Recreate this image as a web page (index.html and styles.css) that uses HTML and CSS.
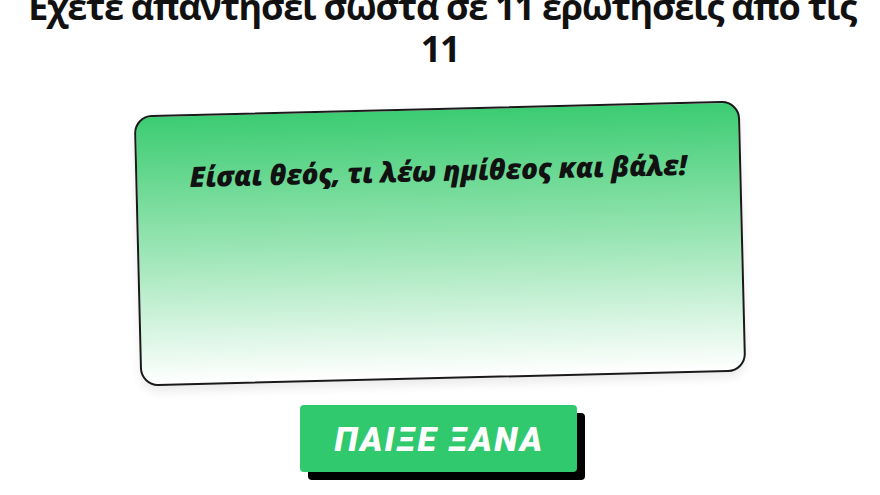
FILE: index.html
```html
<!DOCTYPE html>
<html lang="el">
<head>
<meta charset="utf-8">
<link rel="stylesheet" href="styles.css">
</head>
<body>
<main class="page">
  <h1 class="title">Έχετε απαντήσει σωστά σε 11 ερωτήσεις από τις 11</h1>
  <section class="card">
    <p class="card-text">Είσαι θεός, τι λέω ημίθεος και βάλε!</p>
  </section>
  <button class="replay">ΠΑΙΞΕ ΞΑΝΑ</button>
</main>
</body>
</html>
```
FILE: styles.css
```css
html, body {
  margin: 0;
  padding: 0;
  background: #ffffff;
  overflow: hidden;
}
.page {
  width: 880px;
  height: 495px;
  display: flex;
  flex-direction: column;
  align-items: center;
}
.title {
  margin: -14px 0 0 0;
  width: 860px;
  font-family: "Open Sans", "Noto Sans", sans-serif;
  font-weight: 700;
  font-size: 36px;
  line-height: 42px;
  letter-spacing: -1.25px;
  text-align: center;
  color: #111111;
}
.card {
  margin-top: 38px;
  width: 606px;
  height: 271px;
  box-sizing: border-box;
  border: 2px solid #1a1a1a;
  border-radius: 18px;
  background: linear-gradient(to bottom, #3ccc72 0%, #9ae5b4 50%, #ffffff 100%);
  box-shadow: 0 6px 10px rgba(0, 0, 0, 0.08);
  transform: rotate(-1.4deg);
  padding-top: 42px;
}
.card-text {
  margin: 0;
  text-align: center;
  font-family: "Open Sans", "Noto Sans", sans-serif;
  font-weight: 800;
  font-style: italic;
  font-size: 28px;
  line-height: 36px;
  letter-spacing: -0.2px;
  color: #111111;
}
.replay {
  margin-top: 26px;
  margin-right: 3px;
  width: 277px;
  height: 67px;
  border: none;
  border-radius: 4px;
  background: #30c96d;
  box-shadow: 8px 8px 0 #000000;
  color: #ffffff;
  font-family: "Roboto", "Noto Sans", sans-serif;
  font-weight: 900;
  font-style: italic;
  font-size: 34px;
  letter-spacing: 2.2px;
  padding: 0 0 0 2px;
}
```
